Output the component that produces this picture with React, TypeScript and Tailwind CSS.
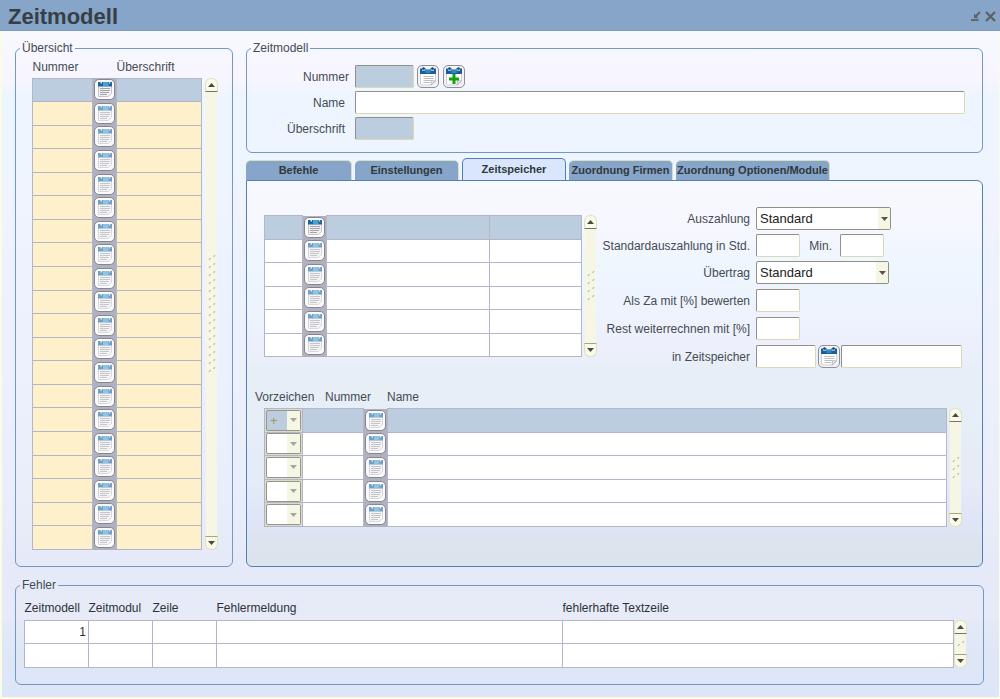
import { useState } from 'react';
import clsx from 'clsx';

const TABS = [
  { name: 'Befehle', width: 'w-[106px]' },
  { name: 'Einstellungen', width: 'w-[104px]' },
  { name: 'Zeitspeicher', width: 'w-[104px]' },
  { name: 'Zuordnung Firmen', width: 'w-[104px]' },
  { name: 'Zuordnung Optionen/Module', width: 'w-[154px]' },
];

const rows = (count: number) => Array.from({ length: count }, (_, i) => i);

const fieldStyle =
  'block h-[23px] rounded-[2px] border border-t-[#8f9186] border-l-[#8f9186] border-r-[#d9dab4] border-b-[#d9dab4] px-1 text-[13px] outline-none';
const cellStyle = 'border border-[#b3b5c8] p-0';
const groupStyle = 'm-0 min-w-0 rounded-md border border-[#7099c9] p-0';
const legendStyle = 'ml-1 px-[2px] leading-4';

function CalendarIcon({ plus = false }: { plus?: boolean }) {
  return (
    <svg viewBox="0 0 18 19" className="h-[19px] w-[18px]" aria-hidden="true">
      <path d="M1.500 6v11q0 1 1 1h10l4-4V6z" fill="#fff" stroke="#cfcfd6" strokeWidth="1" />
      <path d="M12 18l.5-4.500 4 .5z" fill="#e4e4e8" stroke="#a9a9b0" strokeWidth=".7" />
      <path d="M1 1.500h16V7H1z" fill="#1d5c9c" />
      <path d="M3 1.500h3.500v2.500H3zM11.500 1.500H15v2.500h-3.500z" fill="#7cc4e2" />
      <path d="M6.500 3h5v3h-5z" fill="#2f86c0" />
      <path d="M7 .5h4v2H7z" fill="#f3f3f6" />
      <circle cx="4.500" cy="1.500" r="1.300" fill="#16466f" />
      <circle cx="13.500" cy="1.500" r="1.300" fill="#16466f" />
      {plus ? (
        <path d="M7.500 7h3v3.500H14v3h-3.500V17h-3v-3.500H4v-3h3.500z" fill="#12a312" />
      ) : (
        <path d="M4.500 9.500h10M4.500 11.500h10M4.500 13.500h7.500M4.500 15.500h6.500" stroke="#b4b4ba" strokeWidth=".9" />
      )}
    </svg>
  );
}

function GridButton({ label, dim }: { label: string; dim: boolean }) {
  return (
    <button
      type="button"
      aria-label={label}
      className="mx-auto flex h-[21px] w-[21px] items-center justify-center rounded-[5px] border border-[#85868f] bg-[#fafafc]"
    >
      <svg viewBox="0 0 14 15" className={clsx('h-[15px] w-[14px]', dim && 'opacity-60')} aria-hidden="true">
        <path d="M.5 3.500V14.500h9.500l3.500-3V3.500z" fill="#f3f3f5" stroke="#b5b5bb" strokeWidth=".8" />
        <path d="M0 0h14v4.500H0z" fill="#1b62a6" />
        <path d="M5 0h5.500v4H5z" fill="#45a3c9" />
        <path d="M2.500 0h1.500v1.500H2.500zM11 0h1.200v1.500H11z" fill="#cfe6f3" />
        <path d="M2 6.500h10M2 8.500h10M2 10.500h9M2 12.500h7" stroke="#97979e" strokeWidth=".9" />
        <path d="M4.500 5.500v8" stroke="#c4c4ca" strokeWidth=".6" />
      </svg>
    </button>
  );
}

function FormButton({ label, plus }: { label: string; plus?: boolean }) {
  return (
    <button
      type="button"
      aria-label={label}
      className="flex h-[23px] w-[22px] shrink-0 items-center justify-center rounded-[5px] border border-[#8f8f96] bg-[#f3f3f6]"
    >
      <CalendarIcon plus={plus} />
    </button>
  );
}

function CellInput({ label, value }: { label: string; value?: string }) {
  return (
    <input
      type="text"
      aria-label={label}
      defaultValue={value}
      className="block h-[21px] w-full bg-transparent px-[2px] text-right text-[12px] text-[#2c3238] outline-none"
    />
  );
}

function Grip({ count }: { count: number }) {
  return (
    <svg viewBox={`0 0 8 ${count * 8}`} style={{ height: count * 8 }} className="w-2" aria-hidden="true">
      {rows(count).map((i) => (
        <path
          key={i}
          d={`M1 ${i * 8 + 6}l1.500-2M5.500 ${i * 8 + 3}l1.500-2`}
          stroke="#b9bb9e"
          strokeWidth="1.200"
        />
      ))}
    </svg>
  );
}

function ScrollBar({ grip, className }: { grip: number; className?: string }) {
  return (
    <div className={clsx('flex w-[13px] shrink-0 flex-col items-center', className)}>
      <button
        type="button"
        aria-label="Nach oben"
        className="flex h-[14px] w-full shrink-0 items-center justify-center rounded-t-md border border-[#dfe0c0] border-b-[#73746a] bg-[#fafae8]"
      >
        <svg viewBox="0 0 7 4" className="h-1 w-[7px]" aria-hidden="true">
          <path d="M0 4L3.500 0L7 4z" fill="#4a4a44" />
        </svg>
      </button>
      <div className="flex w-[11px] flex-1 items-center justify-center overflow-hidden bg-[#f5f6e4]">
        <Grip count={grip} />
      </div>
      <button
        type="button"
        aria-label="Nach unten"
        className="flex h-[14px] w-full shrink-0 items-center justify-center rounded-b-md border border-[#dfe0c0] border-t-[#a5a67c] bg-[#fafae8]"
      >
        <svg viewBox="0 0 7 4" className="h-1 w-[7px]" aria-hidden="true">
          <path d="M0 0L3.500 4L7 0z" fill="#4a4a44" />
        </svg>
      </button>
    </div>
  );
}

function SelectBox({ id, width }: { id: string; width: string }) {
  return (
    <div className={clsx('relative', width)}>
      <select
        id={id}
        className="block h-[23px] w-full appearance-none rounded-[2px] border border-[#8f9186] bg-white pl-[3px] text-[13px] text-[#222] outline-none"
      >
        <option>Standard</option>
      </select>
      <span className="pointer-events-none absolute inset-y-px right-px flex w-3 items-center justify-center bg-[#f5f6e4]">
        <svg viewBox="0 0 7 4" className="h-1 w-[7px]" aria-hidden="true">
          <path d="M0 0L3.500 4L7 0z" fill="#55554e" />
        </svg>
      </span>
    </div>
  );
}

function SignSelect({ row }: { row: number }) {
  return (
    <div className="relative mx-px">
      <select
        aria-label={`Vorzeichen ${row + 1}`}
        className={clsx(
          'block h-[21px] w-full appearance-none rounded-[2px] border border-[#96978a] pl-[3px] text-[13px] text-[#a39b52] outline-none',
          row === 0 ? 'bg-[#bccddf]' : 'bg-white'
        )}
      >
        <option>{row === 0 ? '+' : ''}</option>
      </select>
      <span className="pointer-events-none absolute inset-y-px right-px flex w-[13px] items-center justify-center bg-[#f5f6e4]">
        <svg viewBox="0 0 7 4" className="h-1 w-[7px]" aria-hidden="true">
          <path d="M0 0L3.500 4L7 0z" fill="#a5a5a0" />
        </svg>
      </span>
    </div>
  );
}

function Overview() {
  return (
    <fieldset className={clsx(groupStyle, 'w-[218px] shrink-0')}>
      <legend className={legendStyle}>Übersicht</legend>
      <div className="flex gap-[3px] pb-4 pl-4">
        <table className="h-[494px] w-[170px] table-fixed border-collapse">
          <colgroup>
            <col className="w-[60px]" />
            <col className="w-6" />
            <col />
          </colgroup>
          <thead>
            <tr className="h-[22px] text-left">
              <th className="p-0 font-normal">Nummer</th>
              <td className="p-0" />
              <th className="p-0 font-normal">Überschrift</th>
            </tr>
          </thead>
          <tbody>
            {rows(20).map((i) => (
              <tr key={i} className={i === 0 ? 'bg-[#bccddf]' : 'bg-[#fff0cc]'}>
                <td className={cellStyle}>
                  <CellInput label={`Nummer ${i + 1}`} />
                </td>
                <td className="border-x border-[#b3b5c8] bg-[#b0b1bf] p-0">
                  <GridButton label={`Auswahl ${i + 1}`} dim={i > 0} />
                </td>
                <td className={cellStyle}>
                  <CellInput label={`Überschrift ${i + 1}`} />
                </td>
              </tr>
            ))}
          </tbody>
        </table>
        <ScrollBar grip={15} className="mt-[22px]" />
      </div>
    </fieldset>
  );
}

function ModelForm() {
  return (
    <fieldset className={groupStyle}>
      <legend className={legendStyle}>Zeitmodell</legend>
      <div className="flex flex-col gap-[3px] pt-[9px] pr-[17px] pb-3">
        <div className="flex items-center">
          <label htmlFor="nummer" className="mr-[6px] w-[102px] shrink-0 text-right">
            Nummer
          </label>
          <input id="nummer" type="text" className={clsx(fieldStyle, 'mr-[3px] w-[59px] bg-[#bccddf]')} />
          <div className="flex gap-1">
            <FormButton label="Liste" />
            <FormButton label="Neu" plus />
          </div>
        </div>
        <div className="flex items-center">
          <label htmlFor="name" className="mr-[10px] w-[98px] shrink-0 text-right">
            Name
          </label>
          <input id="name" type="text" className={clsx(fieldStyle, 'min-w-0 flex-1 bg-white')} />
        </div>
        <div className="flex items-center">
          <label htmlFor="ueberschrift" className="mr-[10px] w-[98px] shrink-0 text-right">
            Überschrift
          </label>
          <input id="ueberschrift" type="text" className={clsx(fieldStyle, 'w-[59px] bg-[#bccddf]')} />
        </div>
      </div>
    </fieldset>
  );
}

function StorageTable() {
  return (
    <div className="mt-2 flex shrink-0 gap-[2px] self-start">
      <table className="h-[142px] w-[318px] table-fixed border-collapse">
        <colgroup>
          <col className="w-[38px]" />
          <col className="w-6" />
          <col />
          <col className="w-[92px]" />
        </colgroup>
        <tbody>
          {rows(6).map((i) => (
            <tr key={i} className={i === 0 ? 'bg-[#bccddf]' : 'bg-white'}>
              <td className={cellStyle}>
                <CellInput label={`Speicher ${i + 1}`} />
              </td>
              <td className="border-x border-[#b3b5c8] bg-[#b0b1bf] p-0">
                <GridButton label={`Speicher wählen ${i + 1}`} dim={i > 0} />
              </td>
              <td className={cellStyle}>
                <CellInput label={`Bezeichnung ${i + 1}`} />
              </td>
              <td className={cellStyle}>
                <CellInput label={`Wert ${i + 1}`} />
              </td>
            </tr>
          ))}
        </tbody>
      </table>
      <ScrollBar grip={4} />
    </div>
  );
}

function PayoutForm() {
  const label = 'mr-[6px] w-[152px] shrink-0 text-right';
  return (
    <div className="flex min-w-0 flex-1 flex-col gap-1">
      <div className="flex items-center">
        <label htmlFor="auszahlung" className={label}>
          Auszahlung
        </label>
        <SelectBox id="auszahlung" width="w-[135px]" />
      </div>
      <div className="flex items-center">
        <label htmlFor="std" className={label}>
          Standardauszahlung in Std.
        </label>
        <input id="std" type="text" className={clsx(fieldStyle, 'w-11 bg-white')} />
        <label htmlFor="min" className="w-10 pr-2 text-right">
          Min.
        </label>
        <input id="min" type="text" className={clsx(fieldStyle, 'w-11 bg-white')} />
      </div>
      <div className="flex items-center">
        <label htmlFor="uebertrag" className={label}>
          Übertrag
        </label>
        <SelectBox id="uebertrag" width="w-[133px]" />
      </div>
      <div className="flex items-center pt-px">
        <label htmlFor="za" className={label}>
          Als Za mit [%] bewerten
        </label>
        <input id="za" type="text" className={clsx(fieldStyle, 'w-11 bg-white')} />
      </div>
      <div className="flex items-center pt-px">
        <label htmlFor="rest" className={label}>
          Rest weiterrechnen mit [%]
        </label>
        <input id="rest" type="text" className={clsx(fieldStyle, 'w-11 bg-white')} />
      </div>
      <div className="flex items-center pt-px">
        <label htmlFor="speicher" className={label}>
          in Zeitspeicher
        </label>
        <input id="speicher" type="text" className={clsx(fieldStyle, 'mr-[2px] w-[60px] bg-white')} />
        <FormButton label="Zeitspeicher wählen" />
        <input
          type="text"
          aria-label="Name des Zeitspeichers"
          className={clsx(fieldStyle, 'ml-px min-w-0 flex-1 bg-white')}
        />
      </div>
    </div>
  );
}

function SignTable() {
  return (
    <div className="pr-5 pl-2">
      <div className="mb-[3px] flex leading-4">
        <span className="w-[70px]">Vorzeichen</span>
        <span className="w-[62px]">Nummer</span>
        <span>Name</span>
      </div>
      <div className="flex gap-[2px] pl-[9px]">
        <table className="h-[119px] w-full table-fixed border-collapse">
          <colgroup>
            <col className="w-[38px]" />
            <col className="w-[61px]" />
            <col className="w-6" />
            <col />
          </colgroup>
          <tbody>
            {rows(5).map((i) => (
              <tr key={i} className={i === 0 ? 'bg-[#bccddf]' : 'bg-white'}>
                <td className={clsx(cellStyle, 'bg-[#d9dbd0]')}>
                  <SignSelect row={i} />
                </td>
                <td className={cellStyle}>
                  <CellInput label={`Nummer ${i + 1}`} />
                </td>
                <td className="border-x border-[#b3b5c8] bg-[#b0b1bf] p-0">
                  <GridButton label={`Zeile wählen ${i + 1}`} dim />
                </td>
                <td className={cellStyle}>
                  <CellInput label={`Name ${i + 1}`} />
                </td>
              </tr>
            ))}
          </tbody>
        </table>
        <ScrollBar grip={3} />
      </div>
    </div>
  );
}

function Errors() {
  return (
    <fieldset className={groupStyle}>
      <legend className={legendStyle}>Fehler</legend>
      <div className="flex pr-4 pb-4 pl-2">
        <table className="h-[75px] w-full table-fixed border-collapse">
          <colgroup>
            <col className="w-16" />
            <col className="w-16" />
            <col className="w-16" />
            <col className="w-[346px]" />
            <col />
          </colgroup>
          <thead>
            <tr className="h-[27px] text-left">
              {['Zeitmodell', 'Zeitmodul', 'Zeile', 'Fehlermeldung', 'fehlerhafte Textzeile'].map((name) => (
                <th key={name} className="p-0 pt-1 font-normal text-[#2c3238]">
                  {name}
                </th>
              ))}
            </tr>
          </thead>
          <tbody className="bg-white">
            {rows(2).map((i) => (
              <tr key={i}>
                {rows(5).map((j) => (
                  <td key={j} className={cellStyle}>
                    <CellInput label={`Fehler ${i + 1}, Spalte ${j + 1}`} value={i === 0 && j === 0 ? '1' : ''} />
                  </td>
                ))}
              </tr>
            ))}
          </tbody>
        </table>
        <ScrollBar grip={1} className="mt-[27px]" />
      </div>
    </fieldset>
  );
}

function App() {
  const [tab, setTab] = useState('Zeitspeicher');

  return (
    <div className="flex min-h-screen flex-col font-['Liberation_Sans',Arial,sans-serif] text-[12px] text-[#454b52]">
      <header className="flex h-[31px] items-center justify-between border-b border-[#7d9dc1] bg-[#86a5c8] pt-[3px] pr-1 pl-2">
        <h1 className="text-[22px] leading-7 font-bold text-[#363f45]">Zeitmodell</h1>
        <div className="flex gap-1 text-[#5d6063]">
          <button type="button" aria-label="Minimieren">
            <svg viewBox="0 0 11 11" className="h-[11px] w-[11px]" aria-hidden="true">
              <path d="M1 9h7.500" stroke="currentColor" strokeWidth="1.800" />
              <path d="M10 1L6 5" stroke="currentColor" strokeWidth="1.800" />
              <path d="M4 2.500v4.500h4.500z" fill="currentColor" />
            </svg>
          </button>
          <button type="button" aria-label="Schließen">
            <svg viewBox="0 0 11 11" className="h-[11px] w-[11px]" aria-hidden="true">
              <path d="M1 1l9 9M10 1l-9 9" stroke="currentColor" strokeWidth="2.200" />
            </svg>
          </button>
        </div>
      </header>

      <main className="flex flex-1 flex-col gap-[10px] border-r border-b-2 border-l-2 border-[#fbfbe6] bg-linear-[180deg,#f8f8ff_0%,#f7f6ff_7%,#edf5fe_10%,#eff5fe_20%,#eef2fe_35%,#edf0fd_50%,#e9eefa_70%,#e6eaf8_80%,#e7eaf7_88%,#dfe7f6_93%,#dde6f8_100%] pt-[9px] pr-[15px] pb-3 pl-[13px]">
        <div className="flex gap-[13px]">
          <Overview />
          <div className="flex min-w-0 flex-1 flex-col pr-px">
            <ModelForm />
            <div role="tablist" className="mt-[5px] flex items-end gap-[3px]">
              {TABS.map((t) => (
                <button
                  key={t.name}
                  type="button"
                  role="tab"
                  aria-selected={tab === t.name}
                  onClick={() => setTab(t.name)}
                  className={clsx(
                    'rounded-t-[5px] text-[11px] font-bold whitespace-nowrap text-[#30383f]',
                    t.width,
                    tab === t.name
                      ? 'h-[22px] border border-b-0 border-[#4f7fb8] bg-[#d9e6fb]'
                      : 'h-5 border-t border-r border-[#d5dfc4] bg-[#86a5c8]'
                  )}
                >
                  {t.name}
                </button>
              ))}
            </div>
            <div className="flex flex-1 flex-col gap-[21px] rounded-b-md rounded-tr-md border border-[#4f80b8] bg-linear-[180deg,#f8f8ff_0%,#f6f7ff_12%,#eef6fe_22%,#eef3fe_34%,#edf0fc_42%,#e7eef6_50%,#e6eef7_62%,#e5ebf7_78%,#dfe5f7_88%,#dce4ee_94%,#dbe4ed_100%] pt-[26px]">
              <div className="flex gap-[1px] pr-5 pl-[17px]">
                <StorageTable />
                <PayoutForm />
              </div>
              <SignTable />
            </div>
          </div>
        </div>
        <Errors />
      </main>
    </div>
  );
}

export default App;
